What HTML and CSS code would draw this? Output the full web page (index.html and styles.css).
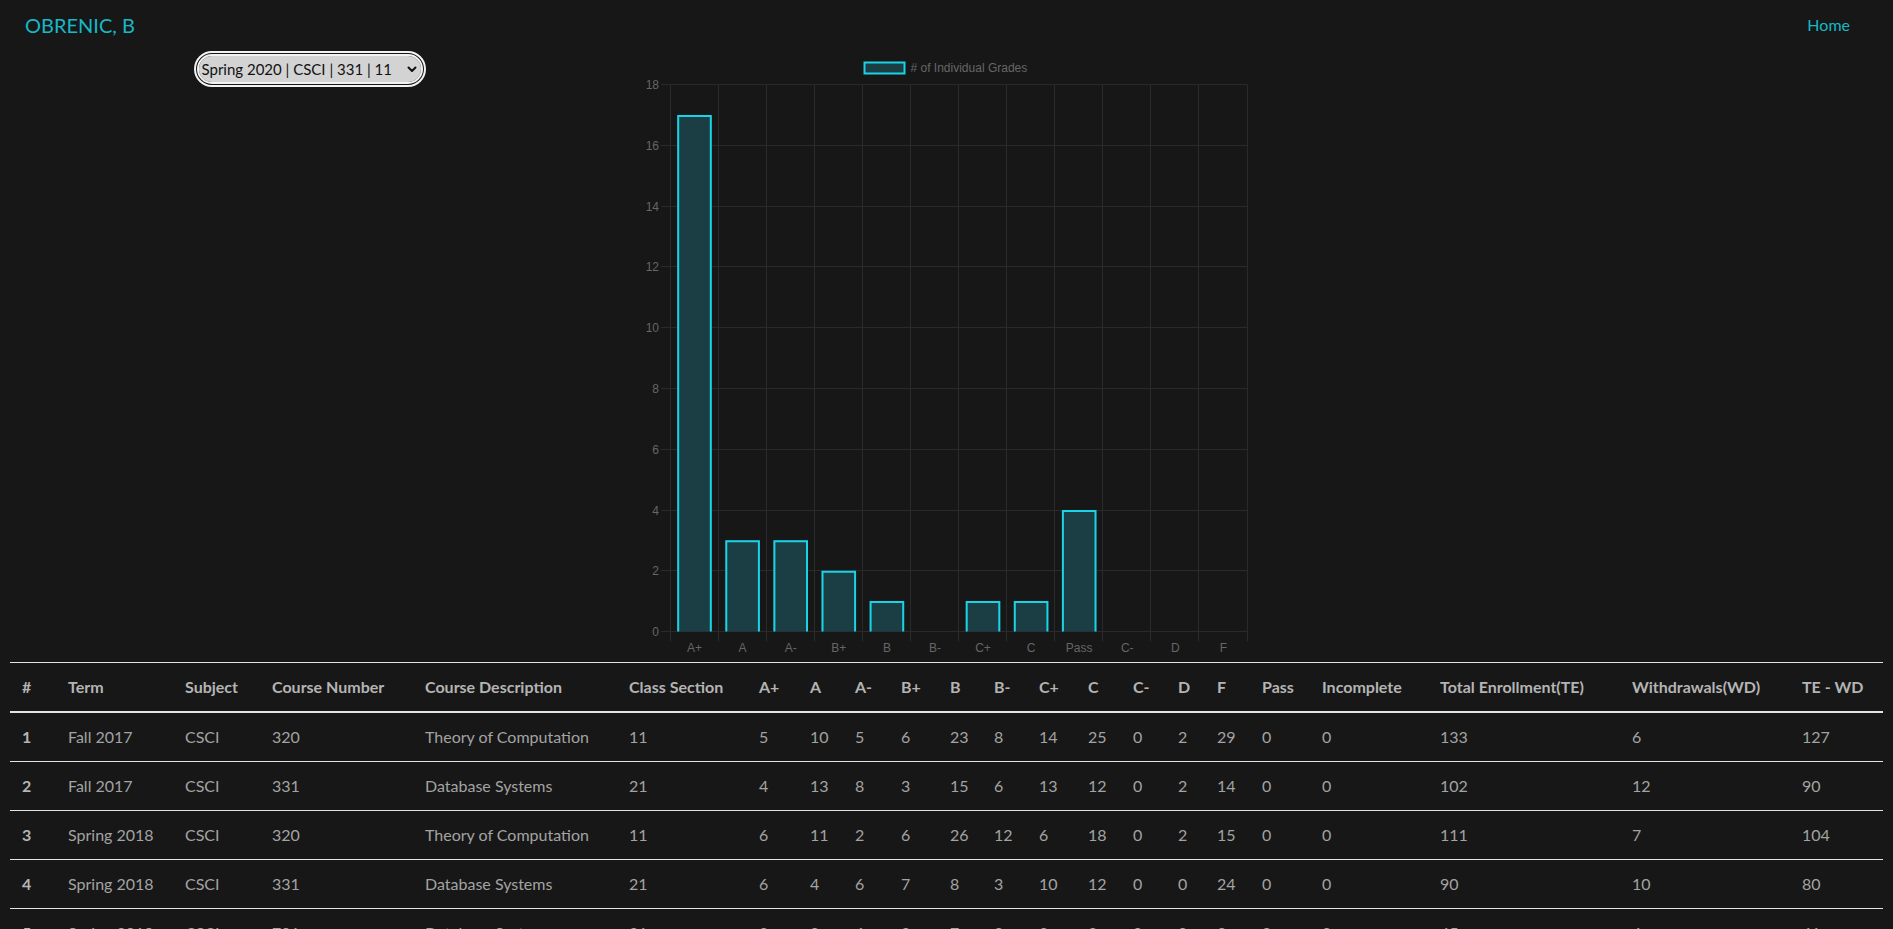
FILE: index.html
```html
<!DOCTYPE html>
<html lang="en">
<head>
    <meta charset="UTF-8">
    <meta name="viewport" content="width=device-width, initial-scale=1.0">
    <title>OBRENIC, B</title>
    <link rel="stylesheet" href="styles.css">
</head>
<body>
    <header class="topbar">
        <a class="brand" href="#">OBRENIC, B</a>
        <a class="home-link" href="#">Home</a>
    </header>

    <main class="panel">
        <div class="picker">
            <div class="select-wrap">
                <select id="coursePicker" class="course-select">
                    <option>Spring 2020 | CSCI | 331 | 11</option>
                    <option>Fall 2017 | CSCI | 320 | 11</option>
                    <option>Fall 2017 | CSCI | 331 | 21</option>
                </select>
                <svg class="chevron" width="10" height="7" viewBox="0 0 10 7"><path d="M1.5 1.5 L5 5 L8.5 1.5" fill="none" stroke="#111" stroke-width="2" stroke-linecap="round" stroke-linejoin="round"/></svg>
            </div>
        </div>

        <svg class="grade-chart" width="640" height="620" viewBox="0 0 640 620">
            <!-- legend -->
            <rect x="238.5" y="20.5" width="40" height="11" fill="#1a3e44" stroke="#1cd2e6" stroke-width="2"/>
            <text class="chart-label" x="284.5" y="29.5"># of Individual Grades</text>

            <!-- horizontal grid -->
            <g stroke="#2a2a2a" stroke-width="1">
                <line x1="35" y1="42.5" x2="621.5" y2="42.5"/>
                <line x1="35" y1="103.5" x2="621.5" y2="103.5"/>
                <line x1="35" y1="164.5" x2="621.5" y2="164.5"/>
                <line x1="35" y1="224.5" x2="621.5" y2="224.5"/>
                <line x1="35" y1="285.5" x2="621.5" y2="285.5"/>
                <line x1="35" y1="346.5" x2="621.5" y2="346.5"/>
                <line x1="35" y1="407.5" x2="621.5" y2="407.5"/>
                <line x1="35" y1="468.5" x2="621.5" y2="468.5"/>
                <line x1="35" y1="528.5" x2="621.5" y2="528.5"/>
                <line x1="35" y1="589.5" x2="621.5" y2="589.5"/>
            </g>
            <!-- vertical grid -->
            <g stroke="#2a2a2a" stroke-width="1">
                <line x1="44.5" y1="42.5" x2="44.5" y2="599.5"/>
                <line x1="92.5" y1="42.5" x2="92.5" y2="599.5"/>
                <line x1="140.5" y1="42.5" x2="140.5" y2="599.5"/>
                <line x1="188.5" y1="42.5" x2="188.5" y2="599.5"/>
                <line x1="236.5" y1="42.5" x2="236.5" y2="599.5"/>
                <line x1="284.5" y1="42.5" x2="284.5" y2="599.5"/>
                <line x1="332.5" y1="42.5" x2="332.5" y2="599.5"/>
                <line x1="380.5" y1="42.5" x2="380.5" y2="599.5"/>
                <line x1="428.5" y1="42.5" x2="428.5" y2="599.5"/>
                <line x1="476.5" y1="42.5" x2="476.5" y2="599.5"/>
                <line x1="524.5" y1="42.5" x2="524.5" y2="599.5"/>
                <line x1="572.5" y1="42.5" x2="572.5" y2="599.5"/>
                <line x1="621.5" y1="42.5" x2="621.5" y2="599.5"/>
            </g>

            <!-- y axis labels -->
            <g class="chart-label" text-anchor="end">
                <text x="33" y="46.5">18</text>
                <text x="33" y="107.5">16</text>
                <text x="33" y="168.5">14</text>
                <text x="33" y="228.5">12</text>
                <text x="33" y="289.5">10</text>
                <text x="33" y="350.5">8</text>
                <text x="33" y="411.5">6</text>
                <text x="33" y="472.5">4</text>
                <text x="33" y="532.5">2</text>
                <text x="33" y="593.5">0</text>
            </g>

            <!-- bars -->
            <g fill="#1a3e44">
                <rect x="51.2" y="72.9" width="34.6" height="516.6"/>
                <rect x="99.3" y="498.3" width="34.6" height="91.2"/>
                <rect x="147.4" y="498.3" width="34.6" height="91.2"/>
                <rect x="195.5" y="528.7" width="34.6" height="60.8"/>
                <rect x="243.6" y="559.1" width="34.6" height="30.4"/>
                <rect x="339.7" y="559.1" width="34.6" height="30.4"/>
                <rect x="387.8" y="559.1" width="34.6" height="30.4"/>
                <rect x="435.9" y="467.9" width="34.6" height="121.6"/>
            </g>
            <g fill="none" stroke="#1cd2e6" stroke-width="2">
                <path d="M52.2 589.5 V73.9 H84.8 V589.5"/>
                <path d="M100.3 589.5 V499.3 H132.9 V589.5"/>
                <path d="M148.4 589.5 V499.3 H181 V589.5"/>
                <path d="M196.5 589.5 V529.7 H229.1 V589.5"/>
                <path d="M244.6 589.5 V560.1 H277.2 V589.5"/>
                <path d="M340.7 589.5 V560.1 H373.3 V589.5"/>
                <path d="M388.8 589.5 V560.1 H421.4 V589.5"/>
                <path d="M436.9 589.5 V468.9 H469.5 V589.5"/>
            </g>

            <!-- x axis labels -->
            <g class="chart-label" text-anchor="middle">
                <text x="68.5" y="610">A+</text>
                <text x="116.6" y="610">A</text>
                <text x="164.7" y="610">A-</text>
                <text x="212.8" y="610">B+</text>
                <text x="260.9" y="610">B</text>
                <text x="308.9" y="610">B-</text>
                <text x="357" y="610">C+</text>
                <text x="405.1" y="610">C</text>
                <text x="453.2" y="610">Pass</text>
                <text x="501.3" y="610">C-</text>
                <text x="549.3" y="610">D</text>
                <text x="597.4" y="610">F</text>
            </g>
        </svg>
    </main>

    <section class="grades">
        <table class="grade-table">
            <colgroup>
                <col style="width: 46px">
                <col style="width: 117px">
                <col style="width: 87px">
                <col style="width: 153px">
                <col style="width: 204px">
                <col style="width: 130px">
                <col style="width: 51px">
                <col style="width: 45px">
                <col style="width: 46px">
                <col style="width: 49px">
                <col style="width: 44px">
                <col style="width: 45px">
                <col style="width: 49px">
                <col style="width: 45px">
                <col style="width: 45px">
                <col style="width: 39px">
                <col style="width: 45px">
                <col style="width: 60px">
                <col style="width: 118px">
                <col style="width: 192px">
                <col style="width: 170px">
                <col>
            </colgroup>
            <thead>
                <tr>
                    <th>#</th><th>Term</th><th>Subject</th><th>Course Number</th><th>Course Description</th><th>Class Section</th>
                    <th>A+</th><th>A</th><th>A-</th><th>B+</th><th>B</th><th>B-</th><th>C+</th><th>C</th><th>C-</th><th>D</th><th>F</th>
                    <th>Pass</th><th>Incomplete</th><th>Total Enrollment(TE)</th><th>Withdrawals(WD)</th><th>TE - WD</th>
                </tr>
            </thead>
            <tbody>
                <tr>
                    <th>1</th><td>Fall 2017</td><td>CSCI</td><td>320</td><td>Theory of Computation</td><td>11</td>
                    <td>5</td><td>10</td><td>5</td><td>6</td><td>23</td><td>8</td><td>14</td><td>25</td><td>0</td><td>2</td><td>29</td>
                    <td>0</td><td>0</td><td>133</td><td>6</td><td>127</td>
                </tr>
                <tr>
                    <th>2</th><td>Fall 2017</td><td>CSCI</td><td>331</td><td>Database Systems</td><td>21</td>
                    <td>4</td><td>13</td><td>8</td><td>3</td><td>15</td><td>6</td><td>13</td><td>12</td><td>0</td><td>2</td><td>14</td>
                    <td>0</td><td>0</td><td>102</td><td>12</td><td>90</td>
                </tr>
                <tr>
                    <th>3</th><td>Spring 2018</td><td>CSCI</td><td>320</td><td>Theory of Computation</td><td>11</td>
                    <td>6</td><td>11</td><td>2</td><td>6</td><td>26</td><td>12</td><td>6</td><td>18</td><td>0</td><td>2</td><td>15</td>
                    <td>0</td><td>0</td><td>111</td><td>7</td><td>104</td>
                </tr>
                <tr>
                    <th>4</th><td>Spring 2018</td><td>CSCI</td><td>331</td><td>Database Systems</td><td>21</td>
                    <td>6</td><td>4</td><td>6</td><td>7</td><td>8</td><td>3</td><td>10</td><td>12</td><td>0</td><td>0</td><td>24</td>
                    <td>0</td><td>0</td><td>90</td><td>10</td><td>80</td>
                </tr>
                <tr>
                    <th>5</th><td>Spring 2019</td><td>CSCI</td><td>701</td><td>Database Systems</td><td>21</td>
                    <td>3</td><td>2</td><td>6</td><td>3</td><td>7</td><td>3</td><td>2</td><td>3</td><td>0</td><td>0</td><td>3</td>
                    <td>0</td><td>0</td><td>45</td><td>4</td><td>41</td>
                </tr>
            </tbody>
        </table>
    </section>
</body>
</html>
```

FILE: styles.css
```css
body {
    margin: 0;
    padding: 0;
    background-color: #171717;
    color: #a0a0a0;
    font-family: Lato, "Liberation Sans", sans-serif;
}

a {
    text-decoration: none;
}

.topbar {
    display: flex;
    justify-content: space-between;
    align-items: flex-start;
    height: 42px;
    box-sizing: border-box;
    padding: 10px 43px 0 25px;
}

.brand {
    color: #18b8c6;
    font-size: 20px;
    line-height: 30px;
}

.home-link {
    color: #18b8c6;
    font-size: 16px;
    line-height: 30px;
}

.panel {
    display: grid;
    grid-template-columns: 626px 640px 1fr;
    align-items: start;
}

.picker {
    display: flex;
    justify-content: center;
    padding: 9px 7px 0 0;
}

.select-wrap {
    position: relative;
}

.course-select {
    appearance: none;
    -webkit-appearance: none;
    width: 232px;
    height: 36px;
    box-sizing: border-box;
    padding: 0 18px 0 3px;
    border: 5px double #f2f2f2;
    border-radius: 18px;
    background-color: #d3d3d3;
    background-clip: padding-box;
    color: #111;
    font-family: Lato, "Liberation Sans", sans-serif;
    font-size: 15px;
}

.chevron {
    position: absolute;
    right: 9px;
    top: 15px;
    pointer-events: none;
}

.grade-chart {
    display: block;
}

.chart-label {
    fill: #666;
    font-family: "Liberation Sans", Arial, sans-serif;
    font-size: 12px;
}

.grades {
    padding: 0 10px;
}

.grade-table {
    width: 100%;
    table-layout: fixed;
    border-collapse: collapse;
    font-size: 16px;
    line-height: 24px;
}

.grade-table th,
.grade-table td {
    padding: 12px;
    text-align: left;
    white-space: nowrap;
    border-top: 1px solid #e4e4e4;
}

.grade-table thead th {
    color: #b4b4b4;
    border-bottom: 2px solid #e4e4e4;
}

.grade-table tbody th {
    color: #b4b4b4;
}

.grade-table td {
    font-weight: normal;
    color: #a3a3a3;
}
```
